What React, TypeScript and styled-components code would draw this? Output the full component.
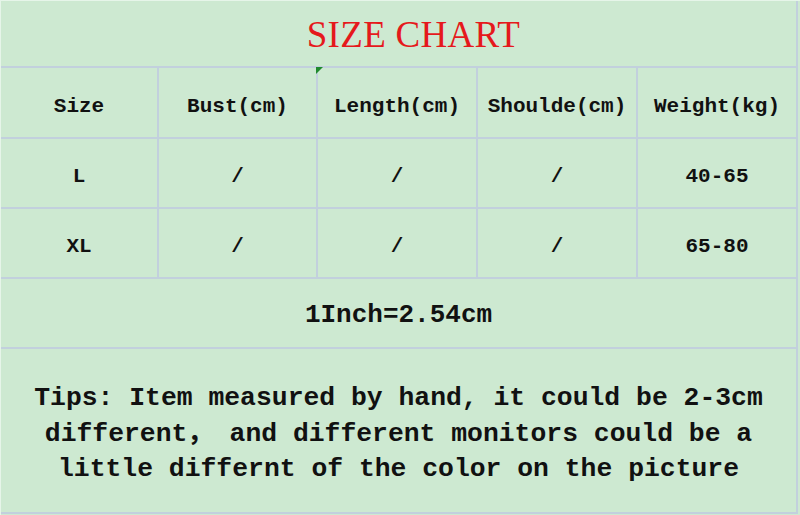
import styled, { createGlobalStyle } from "styled-components";

const GlobalStyle = createGlobalStyle`
    html, body {
        margin: 0;
        padding: 0;
        background: #cde9d1;
    }
`;

const line = "#c2d0dd";

const Page = styled.div`
    width: 800px;
    height: 515px;
    box-sizing: border-box;
    background: #cde9d1;
    border-top: 1px solid #e6f5e9;
    border-left: 1px solid #e6f5e9;
    overflow: hidden;
`;

const Sheet = styled.div`
    position: relative;
    display: grid;
    grid-template-columns: 156px 157px 158px 158px 158px;
    grid-template-rows: 65px 69px 68px 68px 68px 163px;
    gap: 2px;
    width: max-content;
    background: ${line};
    border-right: 2px solid ${line};
    border-bottom: 2px solid ${line};
`;

const Cell = styled.div<{ $span?: number }>`
    grid-column: span ${(p) => p.$span ?? 1};
    display: flex;
    align-items: center;
    justify-content: center;
    background: #cde9d1;
    color: #111;
    font-family: "Liberation Mono", "Noto Sans CJK SC", monospace;
    font-weight: bold;
    font-size: 21px;
`;

const TitleCell = styled(Cell)`
    font-family: "Liberation Serif", serif;
    font-weight: normal;
    font-size: 37px;
    letter-spacing: 0.3px;
    color: #e5191c;
    padding-top: 2px;
    padding-left: 30px;
`;

const HeaderCell = styled(Cell)`
    padding-top: 7px;
`;

const DataCell = styled(Cell)`
    padding-top: 6px;
`;

const NoteCell = styled(Cell)`
    font-size: 26px;
    padding-top: 4px;
`;

const TipsCell = styled(Cell)`
    font-size: 26.4px;
    line-height: 35.5px;
    text-align: center;
    flex-direction: column;
    padding-top: 8px;
`;

const Marker = styled.div<{ $x: number; $y: number }>`
    position: absolute;
    left: ${(p) => p.$x}px;
    top: ${(p) => p.$y}px;
    width: 0;
    height: 0;
    border-top: 7px solid #1f8a2e;
    border-right: 7px solid transparent;
`;

const headers = ["Size", "Bust(cm)", "Length(cm)", "Shoulde(cm)", "Weight(kg)"];
const rows = [
    ["L", "/", "/", "/", "40-65"],
    ["XL", "/", "/", "/", "65-80"],
];

export default function App() {
    return (
        <>
            <GlobalStyle />
            <Page>
                <Sheet>
                    <TitleCell $span={5}>SIZE CHART</TitleCell>
                    {headers.map((h) => (
                        <HeaderCell key={h}>{h}</HeaderCell>
                    ))}
                    {rows.map((r) =>
                        r.map((v, i) => <DataCell key={r[0] + i}>{v}</DataCell>),
                    )}
                    <NoteCell $span={5}>1Inch=2.54cm</NoteCell>
                    <TipsCell $span={5}>
                        <span>Tips: Item measured by hand, it could be 2-3cm</span>
                        <span>different， and different monitors could be a</span>
                        <span>little differnt of the color on the picture</span>
                    </TipsCell>
                    <Marker $x={315} $y={66} />
                </Sheet>
            </Page>
        </>
    );
}
